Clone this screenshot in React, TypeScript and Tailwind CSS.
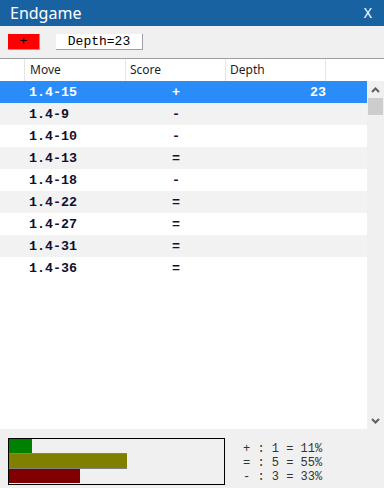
import React from "react";

const rows: [string, string, string][] = [
  ["1.4-15", "+", "23"],
  ["1.4-9", "-", ""],
  ["1.4-10", "-", ""],
  ["1.4-13", "=", ""],
  ["1.4-18", "-", ""],
  ["1.4-22", "=", ""],
  ["1.4-27", "=", ""],
  ["1.4-31", "=", ""],
  ["1.4-36", "=", ""],
];

const mono = { fontFamily: '"Liberation Mono", "Courier New", monospace' };
const ui = { fontFamily: '"Noto Sans", "Open Sans", sans-serif' };

export default function App() {
  return (
    <div className="w-[384px] h-[488px] flex flex-col bg-[#f0f0f0] overflow-hidden">
      {/* Title bar */}
      <div className="h-[26px] bg-[#1962a1] flex items-center justify-between pl-[10px] pr-[12px] text-white" style={ui}>
        <span className="text-[16px] leading-none">Endgame</span>
        <span className="text-[14px] leading-none">X</span>
      </div>
      {/* Toolbar */}
      <div className="h-[32px] flex items-start pt-[8px] pl-[8px] gap-[16px]">
        <div className="w-[32px] h-[16px] bg-[#ff0000] border-r border-b border-[#a0a0a0] flex items-center justify-center text-[13px] text-black leading-none" style={mono}>
          +
        </div>
        <div className="w-[87px] h-[16px] bg-white border-r border-b border-[#a0a0a0] flex items-center justify-center text-[13px] text-black leading-none" style={mono}>
          Depth=23
        </div>
      </div>
      {/* Table */}
      <div className="flex flex-col bg-white border-t border-[#a0a0a0] h-[371px]">
        <div className="h-[22px] flex text-[12px] text-[#1e1e1e] bg-white" style={ui}>
          <div className="w-[25px] border-r border-[#e5e5e5]" />
          <div className="w-[101px] border-r border-[#e5e5e5] pl-[5px] flex items-center">Move</div>
          <div className="w-[100px] border-r border-[#e5e5e5] pl-[4px] flex items-center">Score</div>
          <div className="w-[100px] border-r border-[#e5e5e5] pl-[4px] flex items-center">Depth</div>
          <div className="flex-1" />
        </div>
        <div className="flex flex-1">
          <div className="flex-1 flex flex-col">
            {rows.map((r, i) => {
              const sel = i === 0;
              const bg = sel ? "bg-[#298cf8] text-white" : i % 2 === 1 ? "bg-[#f2f2f2] text-[#101030]" : "bg-white text-[#101030]";
              return (
                <div key={r[0]} className={`h-[22px] flex items-center pt-[2px] font-bold text-[13.33px] ${bg}`} style={mono}>
                  <div className="w-[25px]" />
                  <div className="w-[101px] pl-[4px]">{r[0]}</div>
                  <div className="w-[100px] text-center">{r[1]}</div>
                  <div className="w-[100px] text-right pr-[0px]">{r[2]}</div>
                </div>
              );
            })}
          </div>
          {/* Scrollbar */}
          <div className="w-[17px] bg-[#f0f0f0] flex flex-col">
            <div className="h-[17px] flex items-center justify-center">
              <svg width="9" height="6" viewBox="0 0 9 6">
                <path d="M1 5 L4.5 1.5 L8 5" stroke="#606060" strokeWidth="2" fill="none" />
              </svg>
            </div>
            <div className="mx-[1px] h-[17px] bg-[#cdcdcd]" />
            <div className="flex-1" />
            <div className="h-[17px] flex items-center justify-center">
              <svg width="9" height="6" viewBox="0 0 9 6">
                <path d="M1 1 L4.5 4.5 L8 1" stroke="#606060" strokeWidth="2" fill="none" />
              </svg>
            </div>
          </div>
        </div>
      </div>
      {/* Footer */}
      <div className="flex-1 flex items-start pt-[9px] pl-[8px]">
        <div className="w-[217px] h-[47px] border border-black flex flex-col">
          <div className="h-[14px] w-[23px] bg-[#008000]" />
          <div className="h-[16px] w-[118px] bg-[#808000] border-y border-[#808080]" />
          <div className="h-[14px] w-[71px] bg-[#800000]" />
        </div>
        <div className="ml-[18px] flex flex-col text-[12px] leading-[14px] text-[#333] whitespace-pre pt-[4px]" style={mono}>
          <span>+ : 1 = 11%</span>
          <span>= : 5 = 55%</span>
          <span>- : 3 = 33%</span>
        </div>
      </div>
    </div>
  );
}
